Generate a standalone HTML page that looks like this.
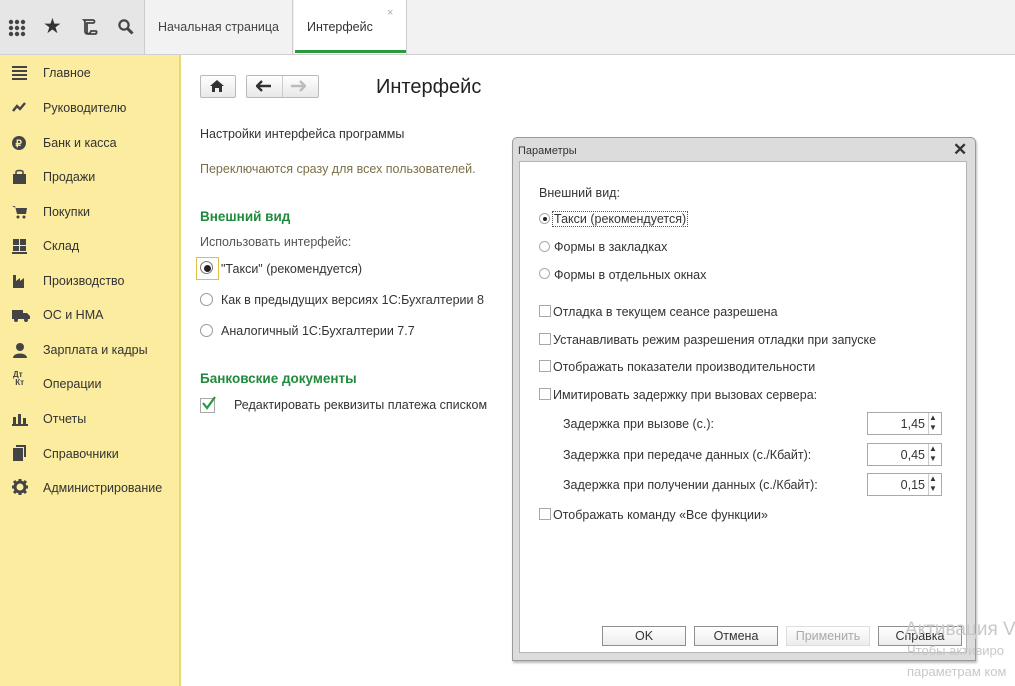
<!DOCTYPE html>
<html><head><meta charset="utf-8"><style>
*{margin:0;padding:0;box-sizing:border-box}
body{width:1015px;height:686px;overflow:hidden;background:#fff;font-family:"Liberation Sans",Arial,sans-serif;font-size:12.5px;color:#333;position:relative}
.a{position:absolute;white-space:nowrap}
.top{position:absolute;left:0;top:0;width:1015px;height:55px;background:#f2f2f2;border-bottom:1px solid #d0d0d0}
.icons{position:absolute;left:0;top:0;width:145px;height:54px;background:#e6e6e6;border-right:1px solid #ccc}
.side{position:absolute;left:0;top:55px;width:181px;height:631px;background:#fbeca0;border-right:2px solid #e8d67a}
.side .it{position:absolute;left:43px;color:#333}
.side svg{position:absolute;left:12px}
.btn{position:absolute;border:1px solid #b9b9b9;border-radius:2px;background:linear-gradient(#fff,#e8e8e8)}
.rad{position:absolute;width:13px;height:13px;border:1px solid #999;border-radius:50%;background:#fff}
.cb{position:absolute;width:12px;height:12px;border:1px solid #a8a8a8;background:#fff}
.dlg{position:absolute;left:512px;top:137px;width:464px;height:524px;background:#dcdcdc;border:1px solid #9a9a9a;border-radius:5px 5px 0 0;box-shadow:1px 2px 2px #bbb}
.dlgin{position:absolute;left:519px;top:161px;width:448px;height:492px;background:#fff;border:1px solid #b5b5b5}
.sp{position:absolute;width:75px;height:23px;border:1px solid #a9a9a9;background:#fff}
.sp span{position:absolute;right:16px;top:4px;color:#333}
.sp i{position:absolute;right:0;top:0;width:13px;height:21px;border-left:1px solid #ccc}
.db{position:absolute;top:626px;height:20px;border:1px solid #8f8f8f;background:linear-gradient(#fff,#ececec);text-align:center;line-height:18px;color:#333}
</style></head><body>
<div class="top"></div>
<div class="icons"></div>
<svg class="a" style="left:8px;top:19px" width="18" height="18"><g fill="#444"><circle cx="3" cy="3" r="2.2"/><circle cx="9" cy="3" r="2.2"/><circle cx="15" cy="3" r="2.2"/><circle cx="3" cy="9" r="2.2"/><circle cx="9" cy="9" r="2.2"/><circle cx="15" cy="9" r="2.2"/><circle cx="3" cy="15" r="2.2"/><circle cx="9" cy="15" r="2.2"/><circle cx="15" cy="15" r="2.2"/></g></svg>
<div class="a" style="left:43px;top:14px;font-size:21px;color:#333">★</div>
<svg class="a" style="left:81px;top:18px" width="18" height="18"><path d="M3 2h9c2 0 2 3 0 3H6v9c0 2 2 2 3 1l1-2h5c1 0 1 3-1 3H7c-2 0-3-1-3-3V4C4 3 3 2 3 2z" fill="none" stroke="#444" stroke-width="1.8"/></svg>
<svg class="a" style="left:117px;top:18px" width="18" height="18"><circle cx="7" cy="7" r="4.6" fill="none" stroke="#444" stroke-width="2.2"/><path d="M10.5 10.5l5 5" stroke="#444" stroke-width="3"/></svg>
<div class="a" style="left:146px;top:0;width:147px;height:54px;border-right:1px solid #ccc;background:#f2f2f2"></div>
<div class="a" style="left:158px;top:20px;color:#444">Начальная страница</div>
<div class="a" style="left:294px;top:0;width:113px;height:54px;background:#fff;border-right:1px solid #ccc"></div>
<div class="a" style="left:295px;top:50px;width:111px;height:3px;background:#2a9a3e"></div>
<div class="a" style="left:307px;top:20px;color:#333">Интерфейс</div>
<div class="a" style="left:387px;top:7px;font-size:11px;color:#aaa">×</div>

<div class="side">
<svg style="top:11px" width="16" height="14"><g fill="#444"><rect y="0" width="15" height="2"/><rect y="4" width="15" height="2"/><rect y="8" width="15" height="2"/><rect y="12" width="15" height="2"/></g></svg><div class="it" style="top:11px">Главное</div>
<svg style="top:46px" width="16" height="12"><path d="M1 10l4-5 3 3 5-6" fill="none" stroke="#444" stroke-width="2.4"/></svg><div class="it" style="top:46px">Руководителю</div>
<svg style="top:80px" width="16" height="16"><circle cx="7" cy="8" r="7" fill="#444"/><text x="3.5" y="12" font-size="10" fill="#fbeca0" font-weight="bold">₽</text></svg><div class="it" style="top:81px">Банк и касса</div>
<svg style="top:114px" width="16" height="16"><path d="M1 5h13v10H1z" fill="#444"/><path d="M4 6V3c0-2 7-2 7 0v3" fill="none" stroke="#444" stroke-width="1.5"/></svg><div class="it" style="top:115px">Продажи</div>
<svg style="top:149px" width="16" height="16"><path d="M0 2h3l2 8h9l1-6H4" fill="#444"/><circle cx="6" cy="13" r="1.5" fill="#444"/><circle cx="12" cy="13" r="1.5" fill="#444"/></svg><div class="it" style="top:150px">Покупки</div>
<svg style="top:183px" width="16" height="16"><g fill="#444"><rect x="1" y="1" width="6" height="6"/><rect x="8" y="1" width="6" height="6"/><rect x="1" y="8" width="6" height="5"/><rect x="8" y="8" width="6" height="5"/><rect x="0" y="14" width="15" height="2"/></g></svg><div class="it" style="top:184px">Склад</div>
<svg style="top:218px" width="16" height="16"><path d="M1 15V2h3v6l4-3v3l4-3v10z" fill="#444"/></svg><div class="it" style="top:219px">Производство</div>
<svg style="top:253px" width="18" height="14"><path d="M0 2h11v9H0zM11 5h4l3 3v3h-7z" fill="#444"/><circle cx="4" cy="12" r="2" fill="#444"/><circle cx="14" cy="12" r="2" fill="#444"/></svg><div class="it" style="top:253px">ОС и НМА</div>
<svg style="top:287px" width="16" height="16"><circle cx="8" cy="5" r="4" fill="#444"/><path d="M1 16c0-6 14-6 14 0z" fill="#444"/></svg><div class="it" style="top:288px">Зарплата и кадры</div>
<div class="a" style="left:13px;top:316px;font-size:8px;font-weight:bold;color:#444;line-height:8px">Дт<br>&nbsp;Кт</div><div class="it" style="top:322px">Операции</div>
<svg style="top:357px" width="16" height="14"><g fill="#444"><rect x="1" y="5" width="3" height="8"/><rect x="6" y="2" width="3" height="11"/><rect x="11" y="6" width="3" height="7"/><rect x="0" y="12" width="16" height="2"/></g></svg><div class="it" style="top:357px">Отчеты</div>
<svg style="top:390px" width="16" height="17"><path d="M4 0h10v12h-2V2H4z M1 3h10v13H1z" fill="#444"/></svg><div class="it" style="top:392px">Справочники</div>
<svg style="top:424px" width="16" height="16"><circle cx="8" cy="8" r="5" fill="none" stroke="#444" stroke-width="3"/><g stroke="#444" stroke-width="3"><path d="M8 0v4M8 12v4M0 8h4M12 8h4M2 2l3 3M11 11l3 3M2 14l3-3M11 5l3-3"/></g><circle cx="8" cy="8" r="2" fill="#fbeca0"/></svg><div class="it" style="top:426px">Администрирование</div>
</div>

<div class="btn" style="left:200px;top:75px;width:36px;height:23px"></div>
<svg class="a" style="left:210px;top:80px" width="14" height="12"><path d="M7 0l7 6h-2v6H9V8H5v4H2V6H0z" fill="#333"/></svg>
<div class="btn" style="left:246px;top:75px;width:73px;height:23px"></div>
<div class="a" style="left:282px;top:76px;width:1px;height:21px;background:#ccc"></div>
<svg class="a" style="left:256px;top:80px" width="16" height="12"><path d="M1 6h14M6 1L1 6l5 5" fill="none" stroke="#333" stroke-width="2.4"/></svg>
<svg class="a" style="left:290px;top:80px" width="16" height="12"><path d="M1 6h14M10 1l5 5-5 5" fill="none" stroke="#bbb" stroke-width="2.4"/></svg>
<div class="a" style="left:376px;top:76px;font-size:20px;color:#222">Интерфейс</div>

<div class="a" style="left:200px;top:127px">Настройки интерфейса программы</div>
<div class="a" style="left:200px;top:162px;color:#7a7048">Переключаются сразу для всех пользователей.</div>
<div class="a" style="left:200px;top:209px;font-size:13.5px;font-weight:bold;color:#1f8a3c">Внешний вид</div>
<div class="a" style="left:200px;top:235px;color:#555">Использовать интерфейс:</div>
<div class="a" style="left:196px;top:257px;width:23px;height:23px;border:1px solid #e0c040"></div>
<div class="rad" style="left:200px;top:261px;border-color:#777"></div><div class="a" style="left:204px;top:265px;width:7px;height:7px;border-radius:50%;background:#222"></div>
<div class="a" style="left:221px;top:262px">"Такси" (рекомендуется)</div>
<div class="rad" style="left:200px;top:293px"></div><div class="a" style="left:221px;top:293px">Как в предыдущих версиях 1С:Бухгалтерии 8</div>
<div class="rad" style="left:200px;top:324px"></div><div class="a" style="left:221px;top:324px">Аналогичный 1С:Бухгалтерии 7.7</div>
<div class="a" style="left:200px;top:371px;font-size:13.5px;font-weight:bold;color:#1f8a3c">Банковские документы</div>
<div class="cb" style="left:200px;top:398px;width:15px;height:15px"></div>
<svg class="a" style="left:201px;top:395px" width="16" height="16"><path d="M2 8l4 5 8-11" fill="none" stroke="#2a9a3e" stroke-width="2.2"/></svg>
<div class="a" style="left:234px;top:398px">Редактировать реквизиты платежа списком</div>

<div class="dlg"></div>
<div class="a" style="left:518px;top:145px;font-size:11px;color:#333">Параметры</div>
<div class="a" style="left:953px;top:140px;font-size:17px;font-weight:bold;color:#333">✕</div>
<div class="dlgin"></div>
<div class="a" style="left:539px;top:186px">Внешний вид:</div>
<div class="rad" style="left:539px;top:213px;width:11px;height:11px;border-color:#aaa"></div><div class="a" style="left:543px;top:217px;width:4px;height:4px;border-radius:50%;background:#222"></div>
<div class="a" style="left:552px;top:211px;border:1px dotted #555;padding:0 1px">Такси (рекомендуется)</div>
<div class="rad" style="left:539px;top:241px;width:11px;height:11px;border-color:#aaa"></div><div class="a" style="left:554px;top:240px">Формы в закладках</div>
<div class="rad" style="left:539px;top:268px;width:11px;height:11px;border-color:#aaa"></div><div class="a" style="left:554px;top:268px">Формы в отдельных окнах</div>
<div class="cb" style="left:539px;top:305px"></div><div class="a" style="left:553px;top:305px">Отладка в текущем сеансе разрешена</div>
<div class="cb" style="left:539px;top:333px"></div><div class="a" style="left:553px;top:333px">Устанавливать режим разрешения отладки при запуске</div>
<div class="cb" style="left:539px;top:360px"></div><div class="a" style="left:553px;top:360px">Отображать показатели производительности</div>
<div class="cb" style="left:539px;top:388px"></div><div class="a" style="left:553px;top:388px">Имитировать задержку при вызовах сервера:</div>
<div class="a" style="left:563px;top:417px">Задержка при вызове (с.):</div>
<div class="sp" style="left:867px;top:412px"><span>1,45</span><i></i></div>
<div class="a" style="left:563px;top:448px">Задержка при передаче данных (с./Кбайт):</div>
<div class="sp" style="left:867px;top:443px"><span>0,45</span><i></i></div>
<div class="a" style="left:563px;top:478px">Задержка при получении данных (с./Кбайт):</div>
<div class="sp" style="left:867px;top:473px"><span>0,15</span><i></i></div>
<div class="a" style="left:929px;top:413px;font-size:8px;line-height:10px;color:#333">▲<br>▼</div>
<div class="a" style="left:929px;top:444px;font-size:8px;line-height:10px;color:#333">▲<br>▼</div>
<div class="a" style="left:929px;top:474px;font-size:8px;line-height:10px;color:#333">▲<br>▼</div>
<div class="cb" style="left:539px;top:508px"></div><div class="a" style="left:553px;top:508px">Отображать команду «Все функции»</div>
<div class="db" style="left:602px;width:84px">OK</div>
<div class="db" style="left:694px;width:84px">Отмена</div>
<div class="db" style="left:786px;width:84px;border-color:#ddd;color:#aaa">Применить</div>
<div class="db" style="left:878px;width:84px">Справка</div>
<div class="a" style="left:905px;top:619px;font-size:19px;color:#c8c8c8">Активация V</div>
<div class="a" style="left:907px;top:643px;font-size:13px;color:#c8c8c8">Чтобы активиро</div>
<div class="a" style="left:907px;top:664px;font-size:13px;color:#c8c8c8">параметрам ком</div>
</body></html>
